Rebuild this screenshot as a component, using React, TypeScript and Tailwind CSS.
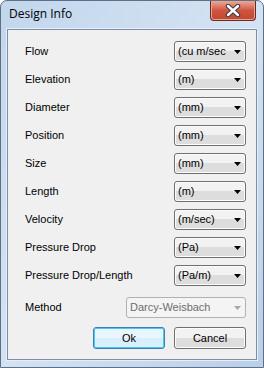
const rows: { label: string; value: string }[] = [
  { label: "Flow", value: "(cu m/sec" },
  { label: "Elevation", value: "(m)" },
  { label: "Diameter", value: "(mm)" },
  { label: "Position", value: "(mm)" },
  { label: "Size", value: "(mm)" },
  { label: "Length", value: "(m)" },
  { label: "Velocity", value: "(m/sec)" },
  { label: "Pressure Drop", value: "(Pa)" },
  { label: "Pressure Drop/Length", value: "(Pa/m)" },
];

function Arrow({ disabled }: { disabled?: boolean }) {
  return (
    <svg width="7" height="4" viewBox="0 0 7 4" className="shrink-0">
      <path d="M0 0h7L3.5 4z" fill={disabled ? "#a8a8a8" : "#000"} />
    </svg>
  );
}

function Combo({ value }: { value: string }) {
  return (
    <div className="flex h-[21px] w-[72px] items-center justify-between rounded-[3px] border border-[#707070] bg-gradient-to-b from-[#f2f2f2] from-50% to-[#dddddd] to-50% pl-[3px] pr-[4px] shadow-[inset_0_0_0_1px_#fcfcfc]">
      <span className="overflow-hidden whitespace-nowrap">{value}</span>
      <Arrow />
    </div>
  );
}

export default function App() {
  return (
    <div className="relative flex h-[368px] w-[264px] flex-col overflow-hidden rounded-t-[7px] border border-[#5e6f86] bg-gradient-to-br from-[#c2d6ec] via-[#d4e3f3] to-[#b9cfe8] font-['Liberation_Sans',sans-serif] text-[11px] text-black">
      <div className="flex h-[28px] shrink-0 items-start justify-between">
        <span className="pl-[8px] pt-[5px] font-['Open_Sans',sans-serif] text-[12px] leading-[16px] text-black">
          Design Info
        </span>
        <div className="mr-[7px] flex h-[20px] w-[46px] items-center justify-center rounded-b-[4px] border border-t-0 border-[#6b2a1f] bg-gradient-to-b from-[#e9a99a] via-[#d0533e] to-[#c0492f] shadow-[inset_0_0_0_1px_#e8a594]">
          <svg width="16" height="13" viewBox="0 0 16 13">
            <path d="M3 2l10 9M13 2L3 11" stroke="#3a3a46" strokeWidth="4.4" strokeLinecap="round" />
            <path d="M3 2l10 9M13 2L3 11" stroke="#fff" strokeWidth="2.4" strokeLinecap="round" />
          </svg>
        </div>
      </div>
      <div className="mx-[6px] mb-[7px] flex flex-1 flex-col border border-[#7d8ea5] bg-[#f0f0f0] pl-[17px] pr-[10px] pt-[11px] shadow-[0_0_0_1px_#e6eef7]">
        <div className="flex flex-col gap-[7px]">
          {rows.map((r) => (
            <div key={r.label} className="flex h-[21px] items-center justify-between">
              <span>{r.label}</span>
              <Combo value={r.value} />
            </div>
          ))}
        </div>
        <div className="mt-[11px] flex h-[21px] items-center justify-between">
          <span>Method</span>
          <div className="flex h-[21px] w-[120px] items-center justify-between rounded-[3px] border border-[#adb2b5] bg-[#f4f4f4] pl-[3px] pr-[4px] text-[#6d6d6d]">
            <span>Darcy-Weisbach</span>
            <Arrow disabled />
          </div>
        </div>
        <div className="mt-[9px] flex justify-end gap-[9px]">
          <button className="h-[22px] w-[72px] rounded-[3px] border border-[#3c7fb1] bg-gradient-to-b from-[#eaf6fd] from-50% to-[#d9f0fc] to-50% shadow-[inset_0_0_0_1px_#48c8f6]">
            Ok
          </button>
          <button className="h-[22px] w-[72px] rounded-[3px] border border-[#707070] bg-gradient-to-b from-[#f2f2f2] from-50% to-[#dddddd] to-50% shadow-[inset_0_0_0_1px_#fcfcfc]">
            Cancel
          </button>
        </div>
      </div>
    </div>
  );
}
